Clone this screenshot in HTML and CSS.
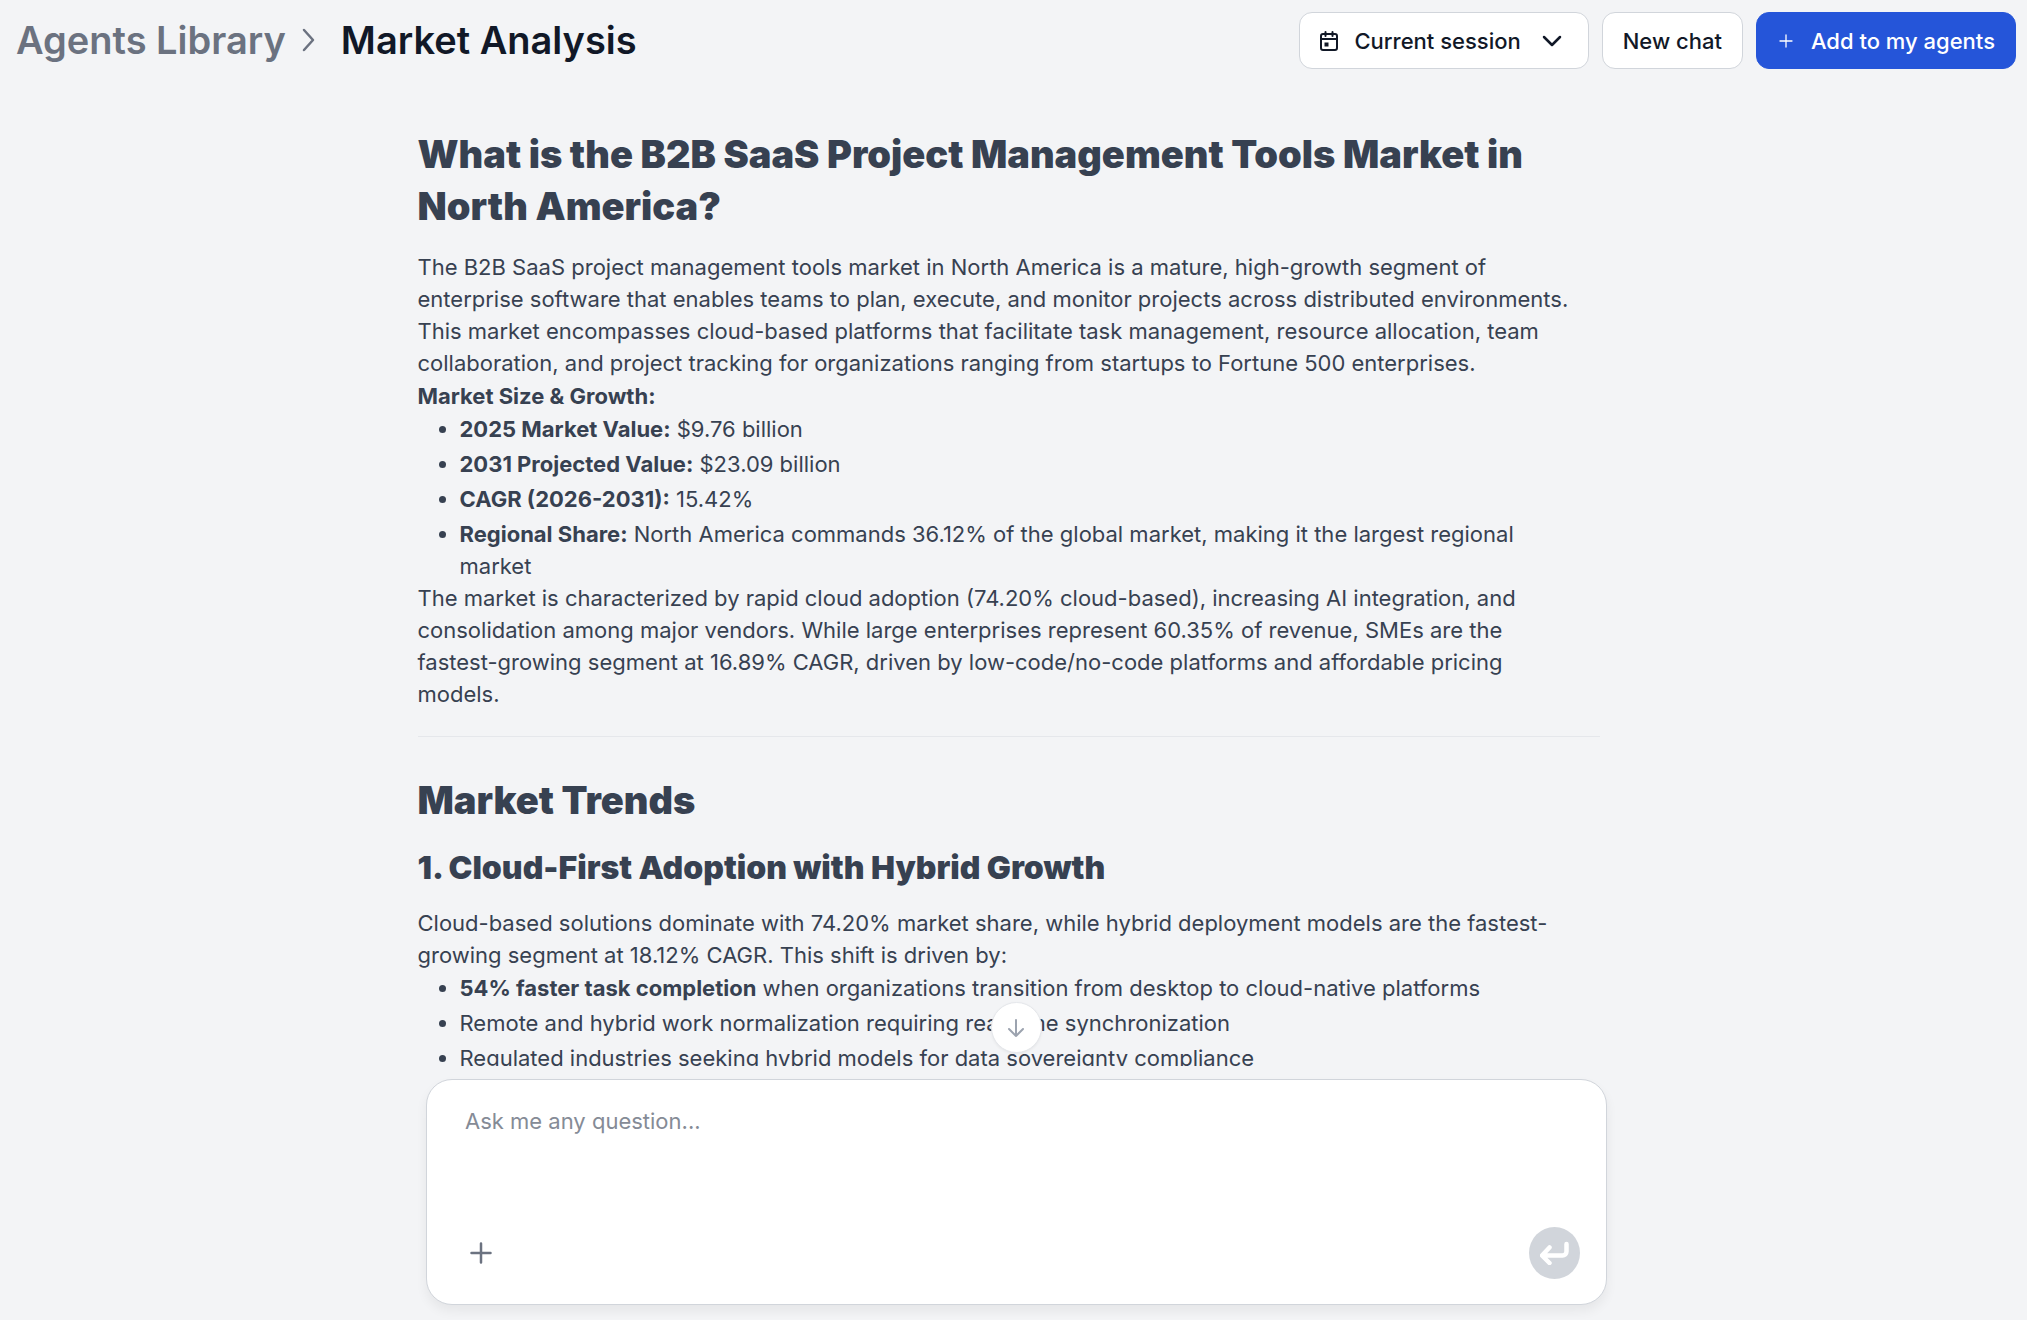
FILE: index.html
```html
<!DOCTYPE html>
<html lang="en">
<head>
    <meta charset="UTF-8">
    <meta name="viewport" content="width=device-width, initial-scale=1.0">
    <title>Market Analysis</title>
    <link rel="stylesheet" href="styles.css">
</head>
<body>
    <header class="topbar">
        <nav class="breadcrumb" aria-label="Breadcrumb">
            <a class="crumb" href="#">Agents Library</a>
            <svg class="crumb-arrow" viewBox="0 0 16 24" fill="none" stroke="currentColor" stroke-width="2.5" stroke-linecap="round" stroke-linejoin="round"><path d="M3 2l9 10-9 10"/></svg>
            <h1>Market Analysis</h1>
        </nav>
        <div class="actions">
            <button class="btn session" type="button">
                <svg class="icon-calendar" viewBox="0 0 18 20" fill="none" stroke="currentColor" stroke-width="2" stroke-linecap="round"><rect x="1" y="3" width="16" height="16" rx="2"/><path d="M1 8h16M5.500 1v4M12.500 1v4"/><rect x="4.500" y="11.500" width="4" height="4" fill="currentColor" stroke="none"/></svg>
                Current session
                <svg class="icon-chevron" viewBox="0 0 20 12" fill="none" stroke="currentColor" stroke-width="2.5" stroke-linecap="round" stroke-linejoin="round"><path d="M2 2l8 8 8-8"/></svg>
            </button>
            <button class="btn" type="button">New chat</button>
            <button class="btn primary" type="button">
                <svg class="icon-add" viewBox="0 0 14 14" stroke="currentColor" stroke-width="1.3" stroke-linecap="round"><path d="M7 1v12M1 7h12"/></svg>
                Add to my agents
            </button>
        </div>
    </header>

    <main class="chat">
        <div class="messages">
            <article class="message">
                <h2>What is the B2B SaaS Project Management Tools Market in North America?</h2>
                <p>The B2B SaaS project management tools market in North America is a mature, high-growth segment of enterprise software that enables teams to plan, execute, and monitor projects across distributed environments. This market encompasses cloud-based platforms that facilitate task management, resource allocation, team collaboration, and project tracking for organizations ranging from startups to Fortune 500 enterprises.</p>
                <p><strong>Market Size &amp; Growth:</strong></p>
                <ul>
                    <li><strong>2025 Market Value:</strong> $9.76 billion</li>
                    <li><strong>2031 Projected Value:</strong> $23.09 billion</li>
                    <li><strong>CAGR (2026-2031):</strong> 15.42%</li>
                    <li><strong>Regional Share:</strong> North America commands 36.12% of the global market, making it the largest regional market</li>
                </ul>
                <p>The market is characterized by rapid cloud adoption (74.20% cloud-based), increasing AI integration, and consolidation among major vendors. While large enterprises represent 60.35% of revenue, SMEs are the fastest-growing segment at 16.89% CAGR, driven by low-code/no-code platforms and affordable pricing models.</p>
                <hr>
                <h2>Market Trends</h2>
                <h3>1. Cloud-First Adoption with Hybrid Growth</h3>
                <p>Cloud-based solutions dominate with 74.20% market share, while hybrid deployment models are the fastest-growing segment at 18.12% CAGR. This shift is driven by:</p>
                <ul>
                    <li><strong>54% faster task completion</strong> when organizations transition from desktop to cloud-native platforms</li>
                    <li>Remote and hybrid work normalization requiring real-time synchronization</li>
                    <li>Regulated industries seeking hybrid models for data sovereignty compliance</li>
                </ul>
            </article>
        </div>

        <div class="composer-wrap">
            <button class="scroll-down" type="button" aria-label="Scroll to bottom">
                <svg viewBox="0 0 18 20" fill="none" stroke="currentColor" stroke-width="2" stroke-linecap="round" stroke-linejoin="round"><path d="M9 2v16M2 11l7 7 7-7"/></svg>
            </button>
            <form class="composer">
                <textarea placeholder="Ask me any question..." aria-label="Message"></textarea>
                <div class="composer-tools">
                    <button class="attach" type="button" aria-label="Add attachment">
                        <svg viewBox="0 0 22 22" stroke="currentColor" stroke-width="2.5" stroke-linecap="round"><path d="M11 1.500v19M1.500 11h19"/></svg>
                    </button>
                    <button class="send" type="submit" aria-label="Send">
                        <svg viewBox="0 0 30 24" fill="none" stroke="currentColor" stroke-width="4.500" stroke-linecap="round" stroke-linejoin="round"><path d="M26.500 3v7.500a4 4 0 0 1-4 4H2.500M9.500 6.500l-7.500 8 7.500 7.500"/></svg>
                    </button>
                </div>
            </form>
        </div>
    </main>
</body>
</html>
```

FILE: styles.css
```css
* {
    box-sizing: border-box;
}
body {
    margin: 0;
    height: 100vh;
    display: flex;
    flex-direction: column;
    overflow: hidden;
    font-family: Inter, sans-serif;
    font-size: 22px;
    line-height: 32px;
    color: #374151;
    background-color: #f3f4f6;
}
button {
    font: inherit;
    cursor: pointer;
}
svg {
    display: block;
    flex: none;
}
.topbar {
    display: flex;
    justify-content: space-between;
    align-items: flex-start;
    padding: 12px 11px 12px 16px;
}
.breadcrumb {
    display: flex;
    align-items: center;
    font-size: 38px;
    line-height: 56px;
}
.crumb {
    color: #6b7280;
    font-weight: 600;
    text-decoration: none;
}
.crumb-arrow {
    width: 16px;
    height: 24px;
    margin: 0 24px 0 15px;
    color: #6b7280;
}
h1 {
    margin: 0;
    font-size: inherit;
    font-weight: 600;
    color: #111827;
}
.actions {
    display: flex;
    gap: 13px;
}
.btn {
    display: flex;
    align-items: center;
    height: 57px;
    padding: 0 20px;
    border: 1px solid #d1d5db;
    border-radius: 13px;
    background-color: #fff;
    color: #111827;
    font-weight: 500;
}
.session {
    padding-right: 26px;
}
.icon-calendar {
    width: 18px;
    height: 20px;
    margin-right: 16px;
}
.icon-chevron {
    width: 20px;
    height: 12px;
    margin-left: 21px;
}
.primary {
    border-color: #2555d9;
    background-color: #2555d9;
    color: #fff;
}
.icon-add {
    width: 14px;
    height: 14px;
    margin-right: 18px;
    margin-left: 2px;
}
.chat {
    flex: 1;
    min-height: 0;
    display: flex;
    flex-direction: column;
}
.messages {
    flex: 1;
    min-height: 0;
    overflow-x: hidden;
    overflow-y: auto;
    scrollbar-width: none;
    padding: 47px 10px 0 0;
}
.message {
    max-width: 1182px;
    margin: 0 auto;
}
h2 {
    margin: 0 0 19px;
    font-size: 38px;
    line-height: 52px;
    font-weight: 900;
}
h3 {
    margin: 0 0 17px;
    font-size: 32px;
    line-height: 45px;
    font-weight: 900;
}
p {
    margin: 0 0 1px;
    padding-right: 20px;
}
strong {
    font-weight: 700;
}
ul {
    margin: 0;
    padding: 0 20px 0 42px;
}
li + li {
    margin-top: 3px;
}
hr {
    margin: 26px 0 37px;
    border: 0;
    border-top: 1px solid #e5e7eb;
}
.composer-wrap {
    position: relative;
    width: 100%;
    max-width: 1181px;
    margin: 13px auto 15px;
    left: 3px;
}
.scroll-down {
    position: absolute;
    left: 50%;
    bottom: 100%;
    margin: 0 0 26px -26px;
    width: 51px;
    height: 51px;
    display: flex;
    align-items: center;
    justify-content: center;
    padding: 0;
    border: 1px solid #e5e7eb;
    border-radius: 50%;
    background-color: #fff;
    color: #9ca3af;
    box-shadow: 0 1px 3px rgba(0, 0, 0, 0.06);
}
.scroll-down svg {
    width: 18px;
    height: 20px;
}
.composer {
    display: flex;
    flex-direction: column;
    height: 226px;
    padding: 25px 26px;
    border: 1px solid #d1d5db;
    border-radius: 26px;
    background-color: #fff;
    box-shadow: 0 6px 12px rgba(0, 0, 0, 0.06);
}
textarea {
    flex: 1;
    padding: 0 12px;
    border: 0;
    outline: none;
    resize: none;
    background: none;
    font: inherit;
    color: #111827;
}
textarea::placeholder {
    color: #858b96;
}
.composer-tools {
    display: flex;
    justify-content: space-between;
    align-items: center;
}
.attach {
    padding: 12px 17px;
    border: 0;
    background: none;
    color: #6b7280;
}
.attach svg {
    width: 22px;
    height: 22px;
}
.send {
    display: flex;
    align-items: center;
    justify-content: center;
    width: 51px;
    height: 52px;
    padding: 0;
    border: 0;
    border-radius: 50%;
    background-color: #d1d5db;
    color: #fff;
}
.send svg {
    width: 30px;
    height: 24px;
}
```
